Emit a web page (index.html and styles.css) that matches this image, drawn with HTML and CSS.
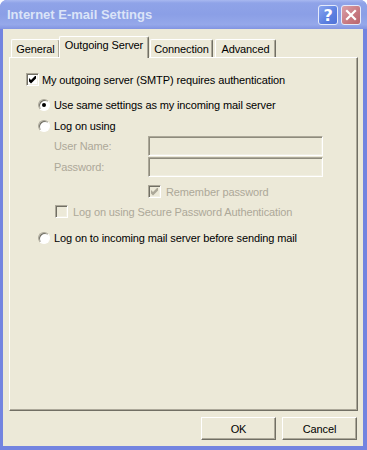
FILE: index.html
```html
<!DOCTYPE html>
<html lang="en">
<head>
    <meta charset="UTF-8">
    <title>Internet E-mail Settings</title>
    <link rel="stylesheet" href="styles.css">
</head>
<body>
    <div class="window">
        <div class="titlebar">
            <span class="title">Internet E-mail Settings</span>
            <div class="caption-buttons">
                <span class="cap-btn cap-help">?</span>
                <span class="cap-btn cap-close">
                    <svg width="12" height="12" viewBox="0 0 12 12"><path d="M2 2 L10 10 M10 2 L2 10" stroke="#fff" stroke-width="2.2" stroke-linecap="square"/></svg>
                </span>
            </div>
        </div>

        <div class="client">
            <div class="tabs">
                <div class="tab tab-general">General</div>
                <div class="tab tab-active">Outgoing Server</div>
                <div class="tab tab-connection">Connection</div>
                <div class="tab tab-advanced">Advanced</div>
            </div>

            <div class="panel">
                <div class="row row-auth">
                    <span class="checkbox">
                        <svg width="9" height="9" viewBox="0 0 9 9"><path d="M1 3 L3 5 L7 1 L8 1 L8 3.5 L3 8.5 L1 6.5 Z" fill="#000"/></svg>
                    </span>
                    <span>My outgoing server (SMTP) requires authentication</span>
                </div>

                <div class="row row-radio row-same">
                    <span class="radio checked"><span class="dot"></span></span>
                    <span>Use same settings as my incoming mail server</span>
                </div>

                <div class="row row-radio row-logon">
                    <span class="radio"></span>
                    <span>Log on using</span>
                </div>

                <div class="field-row field-user">
                    <span class="field-label">User Name:</span>
                    <span class="textbox"></span>
                </div>

                <div class="field-row field-pass">
                    <span class="field-label">Password:</span>
                    <span class="textbox"></span>
                </div>

                <div class="row disabled row-remember">
                    <span class="checkbox">
                        <svg width="9" height="9" viewBox="0 0 9 9"><path d="M1 3 L3 5 L7 1 L8 1 L8 3.5 L3 8.5 L1 6.5 Z" fill="#aca899"/></svg>
                    </span>
                    <span>Remember password</span>
                </div>

                <div class="row disabled row-spa">
                    <span class="checkbox"></span>
                    <span>Log on using Secure Password Authentication</span>
                </div>

                <div class="row row-radio row-before">
                    <span class="radio"></span>
                    <span>Log on to incoming mail server before sending mail</span>
                </div>
            </div>

            <div class="footer">
                <button class="btn">OK</button>
                <button class="btn">Cancel</button>
            </div>
        </div>
    </div>
</body>
</html>
```

FILE: styles.css
```css
body {
    margin: 0;
    background: #fff;
    font-family: "Liberation Sans", Arial, sans-serif;
    font-size: 11px;
    letter-spacing: -0.12px;
    color: #000;
}

.window {
    width: 367px;
    height: 450px;
    box-sizing: border-box;
    display: flex;
    flex-direction: column;
    background: #7384e0;
    border-radius: 7px 7px 0 0;
    overflow: hidden;
}

/* title bar */
.titlebar {
    height: 29px;
    flex: none;
    display: flex;
    align-items: center;
    justify-content: space-between;
    padding: 0 6px 0 7px;
    background: linear-gradient(#a8b8f0 0, #8fa3e8 3px, #8b9fe6 50%, #95a8ea 85%, #8294e2 100%);
}

.title {
    font-size: 13px;
    font-weight: bold;
    color: #dbe4f8;
    letter-spacing: 0;
}

.caption-buttons {
    display: flex;
    gap: 3px;
    margin-top: 1px;
}

.cap-btn {
    width: 20px;
    height: 20px;
    box-sizing: border-box;
    border: 1px solid #e4eafb;
    border-radius: 3px;
    display: flex;
    align-items: center;
    justify-content: center;
    color: #fff;
}

.cap-help {
    background: linear-gradient(135deg, #8aa6ef, #5b7fe0 60%, #4f72d8);
    font-size: 16px;
    font-weight: bold;
    font-family: "DejaVu Sans", sans-serif;
}

.cap-close {
    background: linear-gradient(135deg, #daa0a8, #c77880 60%, #b9656f);
}

/* client area */
.client {
    flex: 1;
    margin: 0 4px 4px 3px;
    background: #ece9d8;
    padding: 7px 5px 6px 6px;
    display: flex;
    flex-direction: column;
}

.tabs {
    height: 21px;
    display: flex;
    align-items: flex-end;
    position: relative;
    z-index: 1;
}

.tab {
    height: 18px;
    line-height: 18px;
    box-sizing: border-box;
    text-align: center;
    background: #ece9d8;
    border-top: 1px solid #fff;
    border-left: 1px solid #fff;
    border-right: 1px solid #716f64;
    border-radius: 2px 2px 0 0;
    box-shadow: inset -1px 0 #aca899;
}

.tab-general { margin-left: 2px; width: 49px; }
.tab-connection { margin-left: 1px; width: 63px; }
.tab-advanced { margin-left: 2px; width: 61px; }

.tab-active {
    margin-left: -1px;
    margin-bottom: -1px;
    width: 90px;
    height: 22px;
    line-height: 16px;
}

.panel {
    height: 354px;
    box-sizing: border-box;
    border-top: 1px solid #fff;
    border-left: 1px solid #fff;
    border-right: 1px solid #716f64;
    border-bottom: 1px solid #716f64;
    box-shadow: inset -1px -1px #aca899;
    padding: 15px 0 0 16px;
    display: flex;
    flex-direction: column;
    align-items: flex-start;
}

.row {
    height: 13px;
    display: flex;
    align-items: center;
    gap: 3px;
    white-space: nowrap;
}

.row-radio { margin-left: 12px; gap: 4px; }
.row-same { margin-top: 12px; }
.row-logon { margin-top: 8px; }
.row-remember { margin-top: 8px; margin-left: 122px; gap: 5px; }
.row-spa { margin-top: 7px; margin-left: 29px; gap: 5px; }
.row-before { margin-top: 13px; }

.disabled { color: #aca899; }

.checkbox {
    width: 13px;
    height: 13px;
    box-sizing: border-box;
    padding: 1px;
    border: 1px solid;
    border-color: #aca899 #fff #fff #aca899;
    box-shadow: inset 1px 1px #716f64, inset -1px -1px #f1efe2;
    background: #fff;
    display: flex;
    flex: none;
}

.disabled .checkbox { background: #ece9d8; }

.radio {
    width: 12px;
    height: 12px;
    box-sizing: border-box;
    border-radius: 50%;
    border: 1px solid;
    border-color: #aca899 #fff #fff #aca899;
    box-shadow: inset 1px 1px #716f64;
    background: #fff;
    display: flex;
    align-items: center;
    justify-content: center;
    flex: none;
}

.dot {
    width: 4px;
    height: 4px;
    border-radius: 50%;
    background: #000;
}

/* user / password fields */
.field-row {
    display: flex;
    align-items: center;
    margin-left: 28px;
    color: #aca899;
}

.field-user { margin-top: 4px; }
.field-pass { margin-top: 1px; }

.field-label { width: 94px; }

.textbox {
    width: 175px;
    height: 20px;
    box-sizing: border-box;
    border: 1px solid;
    border-color: #aca899 #fff #fff #aca899;
    box-shadow: inset 1px 1px #8e8b7c, inset -1px -1px #f1efe2;
    background: #ece9d8;
}

/* buttons */
.footer {
    margin-top: 6px;
    display: flex;
    justify-content: flex-end;
    gap: 6px;
    padding-right: 1px;
}

.btn {
    width: 75px;
    height: 23px;
    box-sizing: border-box;
    padding: 0;
    background: #ece9d8;
    border: 1px solid;
    border-color: #fff #716f64 #716f64 #fff;
    box-shadow: inset -1px -1px #aca899;
    font-family: "Liberation Sans", Arial, sans-serif;
    font-size: 11px;
    letter-spacing: -0.12px;
    color: #000;
}
```
